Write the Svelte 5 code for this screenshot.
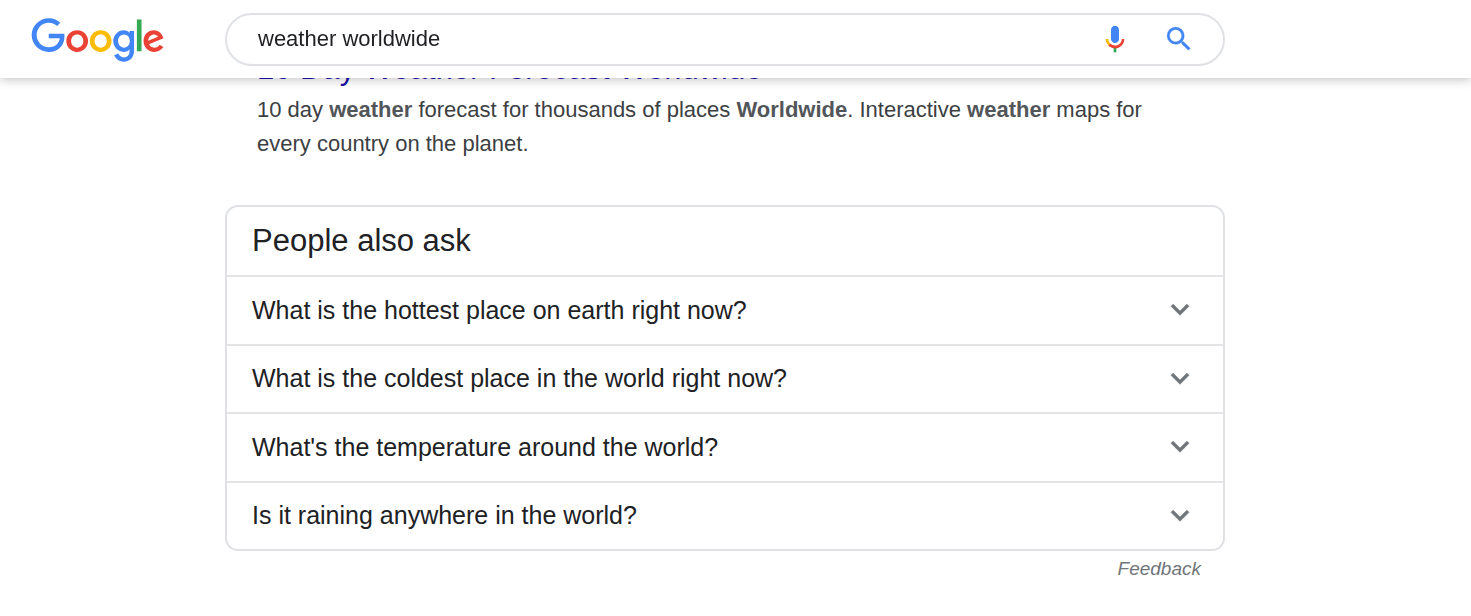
<script lang="ts">
  let query = $state("weather worldwide");
  let opened = $state<number | null>(null);

  const questions = [
    "What is the hottest place on earth right now?",
    "What is the coldest place in the world right now?",
    "What's the temperature around the world?",
    "Is it raining anywhere in the world?",
  ];

  function toggle(index: number) {
    opened = opened === index ? null : index;
  }
</script>

<header class="topbar">
  <a href="/" class="logo" aria-label="Google">
    <svg width="134" height="45" viewBox="0 0 272 92">
      <path
        fill="#4285f4"
        d="M35.29 41.41V32H67c.31 1.64.47 3.58.47 5.68 0 7.06-1.93 15.79-8.15 22.01-6.05 6.3-13.78 9.66-24.02 9.66C16.32 69.35.36 53.89.36 34.91.36 15.93 16.32.47 35.3.47c10.5 0 17.98 4.12 23.6 9.49l-6.64 6.64c-4.03-3.78-9.49-6.72-16.97-6.72-13.86 0-24.7 11.17-24.7 25.03 0 13.86 10.84 25.03 24.7 25.03 8.99 0 14.11-3.61 17.39-6.89 2.66-2.66 4.41-6.46 5.1-11.65l-22.49.01z"
      />
      <path
        fill="#ea4335"
        d="M115.75 47.18c0 12.77-9.99 22.18-22.25 22.18s-22.25-9.41-22.25-22.18C71.25 34.32 81.24 25 93.5 25s22.25 9.32 22.25 22.18zm-9.74 0c0-7.98-5.79-13.44-12.51-13.44S80.99 39.2 80.99 47.18c0 7.9 5.79 13.44 12.51 13.44s12.51-5.55 12.51-13.44z"
      />
      <path
        fill="#fbbc05"
        d="M163.75 47.18c0 12.77-9.99 22.18-22.25 22.18s-22.25-9.41-22.25-22.18c0-12.85 9.99-22.18 22.25-22.18s22.25 9.32 22.25 22.18zm-9.74 0c0-7.98-5.79-13.44-12.51-13.44s-12.51 5.46-12.51 13.44c0 7.9 5.79 13.44 12.51 13.44s12.51-5.55 12.51-13.44z"
      />
      <path
        fill="#4285f4"
        d="M209.75 26.34v39.82c0 16.38-9.66 23.07-21.08 23.07-10.75 0-17.22-7.19-19.66-13.07l8.48-3.53c1.51 3.61 5.21 7.87 11.17 7.87 7.31 0 11.84-4.51 11.84-13v-3.19h-.34c-2.18 2.69-6.38 5.04-11.68 5.04-11.09 0-21.25-9.66-21.25-22.09 0-12.52 10.16-22.26 21.25-22.26 5.29 0 9.49 2.35 11.68 4.96h.34v-3.61h9.25zm-8.56 20.92c0-7.81-5.21-13.52-11.84-13.52-6.72 0-12.35 5.71-12.35 13.52 0 7.73 5.63 13.36 12.35 13.36 6.63 0 11.84-5.63 11.84-13.36z"
      />
      <path fill="#34a853" d="M225 3v65h-9.5V3h9.5z" />
      <path
        fill="#ea4335"
        d="M262.02 54.48l7.56 5.04c-2.44 3.61-8.32 9.83-18.48 9.83-12.6 0-22.01-9.74-22.01-22.18 0-13.19 9.49-22.18 20.92-22.18 11.51 0 17.14 9.16 18.98 14.11l1.01 2.52-29.65 12.28c2.27 4.45 5.8 6.72 10.75 6.72 4.96 0 8.4-2.44 10.92-6.14zm-23.27-7.98l19.82-8.23c-1.09-2.77-4.37-4.7-8.23-4.7-4.95 0-11.84 4.37-11.59 12.93z"
      />
    </svg>
  </a>
  <form class="search" role="search" action="/search">
    <input
      type="text"
      name="q"
      class="search-input"
      aria-label="Search"
      autocomplete="off"
      bind:value={query}
    />
    <button type="button" class="icon-button" aria-label="Search by voice">
      <svg width="32" height="32" viewBox="0 0 24 24">
        <path
          fill="#4285f4"
          d="M12 15c1.66 0 3-1.31 3-2.97V5.01C15 3.35 13.66 2 12 2S9 3.34 9 5.01v7.02C9 13.69 10.34 15 12 15z"
        />
        <path fill="#34a853" d="M11 18.08h2V22h-2z" />
        <path
          fill="#fbbc05"
          d="M7.05 16.87C5.78 15.54 5 14.04 5 12h2c0 1.45.56 2.42 1.47 3.38v.32l-1.15 1.18z"
        />
        <path
          fill="#ea4335"
          d="M12 16.93a4.97 5.25 0 0 1-3.54-1.55l-1.41 1.49C8.31 18.21 10.07 19 12 19c3.87 0 6.99-2.92 6.99-7H17c0 2.92-2.24 4.93-5 4.93z"
        />
      </svg>
    </button>
    <button type="submit" class="icon-button" aria-label="Search">
      <svg width="32" height="32" viewBox="0 0 24 24">
        <path
          fill="#4285f4"
          stroke="#4285f4"
          stroke-width="0.2"
          d="M15.5 14h-.79l-.28-.27A6.471 6.471 0 0 0 16 9.5 6.5 6.5 0 1 0 9.5 16c1.61 0 3.09-.59 4.23-1.57l.27.28v.79l5 4.99L20.49 19l-4.99-5zm-6 0C7.01 14 5 11.99 5 9.5S7.01 5 9.5 5 14 7.01 14 9.5 11.99 14 9.5 14z"
        />
      </svg>
    </button>
  </form>
</header>

<main class="results">
  <article class="result">
    <h3 class="result-title">
      <a href="/weather">10 Day Weather Forecast Worldwide</a>
    </h3>
    <p class="snippet">
      10 day <b>weather</b> forecast for thousands of places <b>Worldwide</b>.
      Interactive <b>weather</b> maps for every country on the planet.
    </p>
  </article>

  <section class="related">
    <h2 class="related-title">People also ask</h2>
    <div class="questions">
      {#each questions as question, index}
        <button
          class="question"
          aria-expanded={opened === index}
          onclick={() => toggle(index)}
        >
          {question}
          <svg class="chevron" width="36" height="36" viewBox="0 0 24 24">
            <path
              fill="#70757a"
              stroke="#70757a"
              stroke-width="0.4"
              stroke-linejoin="round"
              d="M7.41 8.09L12 12.67l4.59-4.58L18 9.5l-6 6-6-6z"
            />
          </svg>
        </button>
      {/each}
    </div>
  </section>
  <a href="/feedback" class="feedback">Feedback</a>
</main>

<style>
  :global(body) {
    margin: 0;
    background: #fff;
    font-family: "Liberation Sans", Arial, sans-serif;
    color: #202124;
  }

  .topbar {
    position: fixed;
    inset: 0 0 auto;
    z-index: 1;
    display: grid;
    grid-template-columns: 194px minmax(0, 1000px);
    box-sizing: border-box;
    padding: 13px 32px 12px 31px;
    background: #fff;
    box-shadow: 0 1px 10px rgba(32, 33, 36, 0.3);
  }

  .logo {
    display: flex;
    padding-top: 5px;
  }

  .search {
    display: flex;
    align-items: center;
    gap: 32px;
    box-sizing: border-box;
    height: 53px;
    padding: 0 28px 2px 31px;
    border: 2px solid #dfe1e5;
    border-radius: 27px;
  }

  .search-input {
    flex: 1;
    min-width: 0;
    padding: 0;
    border: 0;
    outline: 0;
    background: transparent;
    font: inherit;
    font-size: 22px;
    line-height: 32px;
    color: #202124;
  }

  .icon-button {
    display: flex;
    padding: 0;
    border: 0;
    background: transparent;
    cursor: pointer;
  }

  .results {
    display: flex;
    flex-direction: column;
    max-width: 1000px;
    margin-left: 225px;
    margin-right: 32px;
    padding-top: 49px;
  }

  .result {
    padding: 0 32px;
  }

  .result-title {
    margin: 0;
    font-size: 31px;
    font-weight: normal;
    line-height: 40px;
  }

  .result-title a {
    color: #1a0dab;
    text-decoration: none;
  }

  .snippet {
    max-width: 900px;
    margin: 4px 0 0;
    font-size: 22px;
    line-height: 34px;
    color: #3c4043;
  }

  .snippet b {
    color: #52565a;
  }

  .related {
    margin-top: 44px;
    border: 2px solid #dfe1e5;
    border-radius: 13px;
  }

  .related-title {
    margin: 0;
    padding: 0 25px;
    font-size: 31px;
    font-weight: normal;
    line-height: 68px;
  }

  .questions {
    display: grid;
    grid-auto-rows: 1fr;
    min-height: 274px;
  }

  .question {
    display: flex;
    justify-content: space-between;
    align-items: center;
    padding: 0 25px;
    border: 0;
    border-top: 2px solid #e4e4e6;
    background: transparent;
    font: inherit;
    font-size: 25px;
    text-align: left;
    color: #202124;
    cursor: pointer;
  }

  .chevron {
    flex: none;
  }

  .question[aria-expanded="true"] .chevron {
    transform: rotate(180deg);
  }

  .feedback {
    align-self: flex-end;
    margin: 6px 24px 0 0;
    font-size: 19px;
    font-style: italic;
    line-height: 24px;
    color: #70757a;
    text-decoration: none;
  }
</style>
